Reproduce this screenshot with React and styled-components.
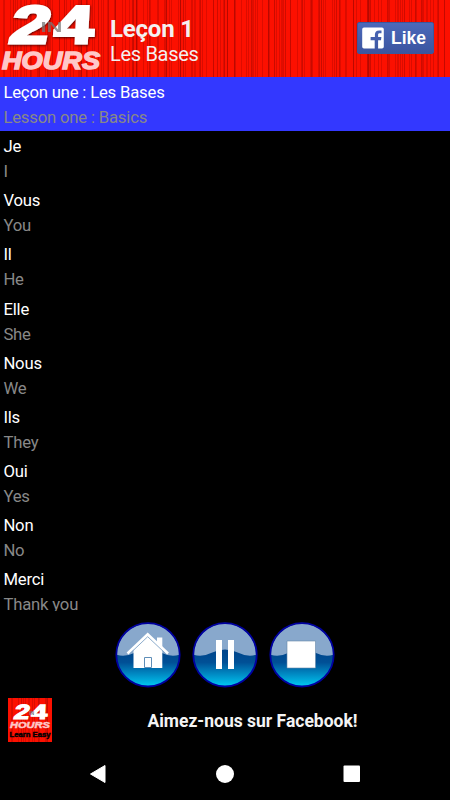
import React from "react";
import styled, { createGlobalStyle, css } from "styled-components";

const lessons = [
  { fr: "Leçon une : Les Bases", en: "Lesson one : Basics" },
  { fr: "Je", en: "I" },
  { fr: "Vous", en: "You" },
  { fr: "Il", en: "He" },
  { fr: "Elle", en: "She" },
  { fr: "Nous", en: "We" },
  { fr: "Ils", en: "They" },
  { fr: "Oui", en: "Yes" },
  { fr: "Non", en: "No" },
  { fr: "Merci", en: "Thank you" },
];

const Logo = () => (
  <svg width="108" height="77" viewBox="0 0 108 77">
    <defs>
      <filter id="shade" x="-10%" y="-10%" width="120%" height="130%">
        <feDropShadow dx="0.5" dy="0.8" stdDeviation="1.2" floodColor="#300" floodOpacity="0.9" />
      </filter>
    </defs>
    <g filter="url(#shade)" fontSize="53" fill="#fff" stroke="#fff" strokeWidth="3">
      <LogoText $upright transform="translate(7.5 43.2) skewX(-12) scale(1.33 1)">
        2
      </LogoText>
      <LogoText $upright transform="translate(53.5 43.2) skewX(-3) scale(1.33 1)">
        4
      </LogoText>
    </g>
    <LogoText
      $upright
      x="40.5"
      y="31.5"
      fontSize="15"
      fill="#777"
      opacity="0.75"
      textLength="22"
      lengthAdjust="spacingAndGlyphs"
    >
      IN
    </LogoText>
    <LogoText
      x="2"
      y="69"
      fontSize="24.5"
      fill="#ffc8c8"
      stroke="#ffc8c8"
      strokeWidth="1.4"
      textLength="98"
      lengthAdjust="spacingAndGlyphs"
    >
      HOURS
    </LogoText>
  </svg>
);

const SmallLogo = () => (
  <svg width="44" height="44" viewBox="0 0 44 44">
    <g fontSize="20.5" fill="#fff" stroke="#fff" strokeWidth="1.2">
      <LogoText $upright transform="translate(5 20.8) skewX(-12) scale(1.35 1)">
        2
      </LogoText>
      <LogoText $upright transform="translate(23 20.8) skewX(-3) scale(1.4 1)">
        4
      </LogoText>
    </g>
    <LogoText $upright x="21" y="16.5" fontSize="5" fill="#777">
      IN
    </LogoText>
    <LogoText
      x="2"
      y="30.2"
      fontSize="9.6"
      fill="#ffc8c8"
      stroke="#ffc8c8"
      strokeWidth="0.5"
      textLength="40"
      lengthAdjust="spacingAndGlyphs"
    >
      HOURS
    </LogoText>
    <LogoText
      $upright
      x="1.5"
      y="39"
      fontSize="6.8"
      fill="#000"
      stroke="#000"
      strokeWidth="0.4"
      textLength="41"
      lengthAdjust="spacingAndGlyphs"
    >
      Learn Easy
    </LogoText>
  </svg>
);

const FacebookIcon = () => (
  <svg width="22" height="22" viewBox="0 0 22 22">
    <path
      fill="#fff"
      d="M2 .5h18a1.8 1.8 0 0 1 1.8 1.8v17.4a1.8 1.8 0 0 1-1.8 1.8h-3.9v-8.3h2.9l.4-3.3h-3.3V7.8c0-1 .4-1.5 1.6-1.5h1.8V3.5c-.6-.1-1.4-.1-2.4-.1-2.6 0-4.2 1.5-4.2 4.2v2.3H8.6v3.3h4.1v8.3H2A1.8 1.8 0 0 1 .2 19.7V2.3A1.8 1.8 0 0 1 2 .5z"
    />
  </svg>
);

const Orb = ({ label, children }) => (
  <OrbButton aria-label={label}>
    <svg width="66" height="66" viewBox="0 0 66 66">
      <defs>
        <linearGradient id="orb" x1="0" y1="0" x2="0" y2="1">
          <stop offset="0.45" stopColor="#00468c" />
          <stop offset="0.62" stopColor="#005096" />
          <stop offset="0.82" stopColor="#0090c8" />
          <stop offset="1" stopColor="#00ccf4" />
        </linearGradient>
      </defs>
      <circle cx="33" cy="32.8" r="32" fill="url(#orb)" />
      <path
        d="M1.8 32.8a31.2 31.2 0 0 1 62.4 0Q56 35.5 47 31Q33 24 19 31Q10 35.5 1.8 32.8z"
        fill="#88a8cc"
      />
      <circle cx="33" cy="32.8" r="31.7" fill="none" stroke="#0000a0" strokeWidth="1.8" />
      {children}
    </svg>
  </OrbButton>
);

const App = () => {
  return (
    <>
      <GlobalStyle />
      <Screen>
        <Header>
          <Logo />
          <Titles>
            <h1>Leçon 1</h1>
            <h2>Les Bases</h2>
          </Titles>
          <LikeButton>
            <FacebookIcon />
            <span>Like</span>
          </LikeButton>
        </Header>
        <List>
          {lessons.map((item, i) => (
            <Row key={item.fr} $active={i === 0}>
              <French>{item.fr}</French>
              <English>{item.en}</English>
            </Row>
          ))}
        </List>
        <Controls>
          <Orb label="Accueil">
            <path d="M42 15.5h5.3v13h-5.3z" fill="#fff" />
            <path d="M18.5 27L32.7 13L47.3 27V46H18.5z" fill="#fff" />
            <path d="M12.5 31.5L32.7 12.3L53 31.5" fill="none" stroke="#fff" strokeWidth="2.6" />
            <path d="M15 31.5L32.7 14.7L50.5 31.5" fill="none" stroke="#7fa3c6" strokeWidth="0.9" />
            <path d="M29.5 45.5V35.5h7v10z" fill="#fff" stroke="#5f8eb8" strokeWidth="1" />
          </Orb>
          <Orb label="Pause">
            <path d="M24 18h6v29h-6zM36 18h6v29h-6z" fill="#fff" />
          </Orb>
          <Orb label="Stop">
            <path d="M18 19h28.500v27h-28.500z" fill="#fff" stroke="#6688a8" strokeWidth="0.6" />
          </Orb>
        </Controls>
        <Banner>
          <Thumb>
            <SmallLogo />
          </Thumb>
          <p>Aimez-nous sur Facebook!</p>
        </Banner>
        <NavBar>
          <svg width="18" height="20" viewBox="0 0 18 20">
            <path d="M1.5 10L16 1.5V18.5z" fill="#fff" stroke="#fff" strokeLinejoin="round" />
          </svg>
          <svg width="18" height="20" viewBox="0 0 18 20">
            <circle cx="9" cy="10" r="9" fill="#fff" />
          </svg>
          <svg width="18" height="20" viewBox="0 0 18 20">
            <rect x="0.5" y="1.5" width="16.5" height="16.5" rx="1" fill="#fff" />
          </svg>
        </NavBar>
      </Screen>
    </>
  );
};

const GlobalStyle = createGlobalStyle`
  * {
    box-sizing: border-box;
  }
  body {
    margin: 0;
    background: #000;
  }
  h1, h2, p {
    margin: 0;
  }
  svg {
    display: block;
  }
`;

const curtain = css`
  background:
    repeating-linear-gradient(90deg, transparent 0 3px, rgba(130, 0, 0, 0.25) 3px 4px, transparent 4px 7px),
    repeating-linear-gradient(90deg, transparent 0 4px, rgba(120, 0, 0, 0.25) 4px 5px, transparent 5px 11px),
    repeating-linear-gradient(90deg, transparent 0 13px, rgba(100, 0, 0, 0.3) 13px 14px, transparent 14px 17px),
    repeating-linear-gradient(90deg, transparent 0 20px, rgba(110, 0, 0, 0.2) 20px 22px, transparent 22px 29px),
    repeating-linear-gradient(90deg, transparent 0 39px, rgba(80, 0, 0, 0.3) 39px 40px, transparent 40px 47px),
    #fc1000;
`;

const Screen = styled.div`
  width: 450px;
  height: 800px;
  display: flex;
  flex-direction: column;
  overflow: hidden;
  background: #000;
  color: #fff;
  font-family: Roboto, sans-serif;
`;

const Header = styled.header`
  ${curtain}
  height: 77px;
  flex: none;
  display: flex;
  align-items: center;
  padding-right: 16px;
`;

const LogoText = styled.text`
  font-family: "Liberation Sans", Arial, sans-serif;
  font-weight: bold;
  font-style: ${({ $upright }) => ($upright ? "normal" : "italic")};
`;

const Titles = styled.div`
  flex: 1;
  padding: 3px 0 0 2px;
  color: #f4f0f0;
  h1 {
    font-size: 24px;
    line-height: 28px;
    font-weight: 700;
    letter-spacing: -0.2px;
  }
  h2 {
    font-size: 20px;
    line-height: 23px;
    font-weight: 400;
    letter-spacing: -0.3px;
  }
`;

const LikeButton = styled.button`
  width: 77px;
  height: 32px;
  margin-top: -1px;
  padding: 0 0 0 4px;
  display: flex;
  align-items: center;
  gap: 7px;
  border: 1px solid #3b579d;
  border-radius: 2px;
  background: linear-gradient(#4c69ba, #3b55a0);
  color: #fff;
  font: bold 17.5px "Liberation Sans", Arial, sans-serif;
  span {
    padding-top: 1px;
  }
`;

const List = styled.main`
  height: 534px;
  flex: none;
  overflow: hidden;
`;

const Row = styled.div`
  height: 54.13px;
  padding: 3px 3px 0 3.4px;
  font-size: 16.7px;
  letter-spacing: -0.19px;
  background: ${({ $active }) => ($active ? "#3338ff" : "transparent")};
`;

const French = styled.div`
  line-height: 25px;
`;

const English = styled.div`
  line-height: 26px;
  color: #888;
`;

const Controls = styled.div`
  height: 87px;
  flex: none;
  display: flex;
  justify-content: center;
  gap: 11px;
  padding-top: 11px;
`;

const OrbButton = styled.button`
  width: 66px;
  height: 66px;
  padding: 0;
  border: 0;
  background: none;
`;

const Banner = styled.section`
  height: 44px;
  flex: none;
  display: flex;
  align-items: center;
  padding: 0 8px;
  p {
    flex: 1;
    padding: 2px 0 0 11px;
    text-align: center;
    font-size: 17.5px;
    font-weight: 700;
    color: #f4f4f4;
  }
`;

const Thumb = styled.div`
  ${curtain}
  width: 44px;
  height: 44px;
`;

const NavBar = styled.nav`
  flex: 1;
  display: flex;
  align-items: center;
  justify-content: space-between;
  padding: 5px 89px 0;
`;

export default App;
